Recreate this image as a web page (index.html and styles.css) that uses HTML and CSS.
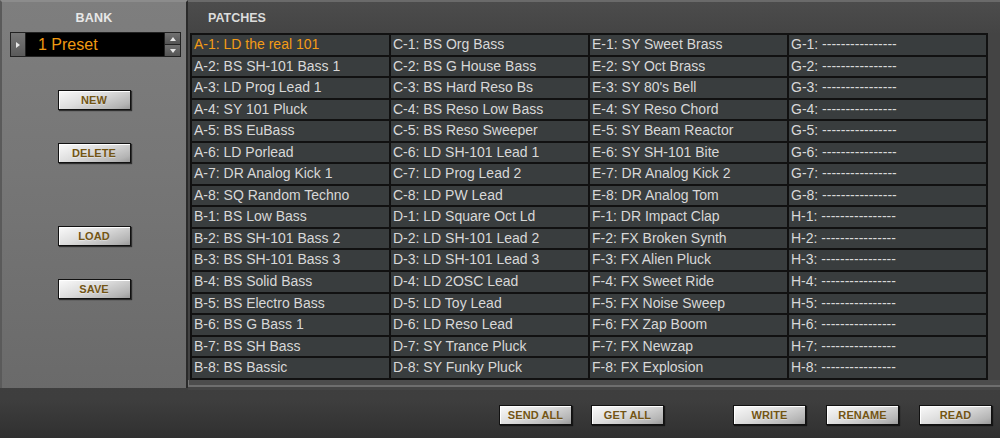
FILE: index.html
```html
<!DOCTYPE html>
<html>
<head>
<meta charset="utf-8">
<link rel="stylesheet" href="styles.css">
</head>
<body>
<div class="app">
  <div class="top">
    <aside class="bank">
      <div class="bank-title">BANK</div>
      <div class="dropdown">
        <div class="dd-left"><span class="tri-right"></span></div>
        <div class="dd-field">1 Preset</div>
        <div class="dd-spin">
          <div class="spin-btn"><span class="tri-up"></span></div>
          <div class="spin-btn"><span class="tri-down"></span></div>
        </div>
      </div>
      <div class="btn btn-new">NEW</div>
      <div class="btn btn-delete">DELETE</div>
      <div class="btn btn-load">LOAD</div>
      <div class="btn btn-save">SAVE</div>
    </aside>
    <section class="patches">
      <div class="patches-title">PATCHES</div>
      <div class="grid">
        <div class="cell sel">A-1: LD the real 101</div>
        <div class="cell">C-1: BS Org Bass</div>
        <div class="cell">E-1: SY Sweet Brass</div>
        <div class="cell">G-1: ----------------</div>
        <div class="cell">A-2: BS SH-101 Bass 1</div>
        <div class="cell">C-2: BS G House Bass</div>
        <div class="cell">E-2: SY Oct Brass</div>
        <div class="cell">G-2: ----------------</div>
        <div class="cell">A-3: LD Prog Lead 1</div>
        <div class="cell">C-3: BS Hard Reso Bs</div>
        <div class="cell">E-3: SY 80's Bell</div>
        <div class="cell">G-3: ----------------</div>
        <div class="cell">A-4: SY 101 Pluck</div>
        <div class="cell">C-4: BS Reso Low Bass</div>
        <div class="cell">E-4: SY Reso Chord</div>
        <div class="cell">G-4: ----------------</div>
        <div class="cell">A-5: BS EuBass</div>
        <div class="cell">C-5: BS Reso Sweeper</div>
        <div class="cell">E-5: SY Beam Reactor</div>
        <div class="cell">G-5: ----------------</div>
        <div class="cell">A-6: LD Porlead</div>
        <div class="cell">C-6: LD SH-101 Lead 1</div>
        <div class="cell">E-6: SY SH-101 Bite</div>
        <div class="cell">G-6: ----------------</div>
        <div class="cell">A-7: DR Analog Kick 1</div>
        <div class="cell">C-7: LD Prog Lead 2</div>
        <div class="cell">E-7: DR Analog Kick 2</div>
        <div class="cell">G-7: ----------------</div>
        <div class="cell">A-8: SQ Random Techno</div>
        <div class="cell">C-8: LD PW Lead</div>
        <div class="cell">E-8: DR Analog Tom</div>
        <div class="cell">G-8: ----------------</div>
        <div class="cell">B-1: BS Low Bass</div>
        <div class="cell">D-1: LD Square Oct Ld</div>
        <div class="cell">F-1: DR Impact Clap</div>
        <div class="cell">H-1: ----------------</div>
        <div class="cell">B-2: BS SH-101 Bass 2</div>
        <div class="cell">D-2: LD SH-101 Lead 2</div>
        <div class="cell">F-2: FX Broken Synth</div>
        <div class="cell">H-2: ----------------</div>
        <div class="cell">B-3: BS SH-101 Bass 3</div>
        <div class="cell">D-3: LD SH-101 Lead 3</div>
        <div class="cell">F-3: FX Alien Pluck</div>
        <div class="cell">H-3: ----------------</div>
        <div class="cell">B-4: BS Solid Bass</div>
        <div class="cell">D-4: LD 2OSC Lead</div>
        <div class="cell">F-4: FX Sweet Ride</div>
        <div class="cell">H-4: ----------------</div>
        <div class="cell">B-5: BS Electro Bass</div>
        <div class="cell">D-5: LD Toy Lead</div>
        <div class="cell">F-5: FX Noise Sweep</div>
        <div class="cell">H-5: ----------------</div>
        <div class="cell">B-6: BS G Bass 1</div>
        <div class="cell">D-6: LD Reso Lead</div>
        <div class="cell">F-6: FX Zap Boom</div>
        <div class="cell">H-6: ----------------</div>
        <div class="cell">B-7: BS SH Bass</div>
        <div class="cell">D-7: SY Trance Pluck</div>
        <div class="cell">F-7: FX Newzap</div>
        <div class="cell">H-7: ----------------</div>
        <div class="cell">B-8: BS Bassic</div>
        <div class="cell">D-8: SY Funky Pluck</div>
        <div class="cell">F-8: FX Explosion</div>
        <div class="cell">H-8: ----------------</div>
      </div>
      <div class="patches-foot"></div>
    </section>
  </div>
  <footer class="bottom">
    <div class="btn b-send">SEND ALL</div>
    <div class="btn b-get">GET ALL</div>
    <div class="btn b-write">WRITE</div>
    <div class="btn b-rename">RENAME</div>
    <div class="btn b-read">READ</div>
  </footer>
</div>
</body>
</html>
```

FILE: styles.css
```css
* { box-sizing: border-box; }
html, body {
  margin: 0;
  padding: 0;
  width: 1000px;
  height: 438px;
  overflow: hidden;
  background: #363636;
  font-family: "Liberation Sans", Arial, Helvetica, sans-serif;
}
.app {
  width: 1000px;
  height: 438px;
  display: flex;
  flex-direction: column;
  background: linear-gradient(180deg, #464646 0px, #3e3e3e 400px, #303030 438px);
}
.top {
  display: flex;
  height: 390px;
}
.bank {
  width: 188px;
  height: 388px;
  background: linear-gradient(180deg, #7e7e7e 0%, #777 40%, #6a6a6a 100%);
  border-top: 2px solid #8c8c8c;
  border-left: 2px solid #5a5a5a;
  border-right: 2px solid #2a2a2a;
  display: flex;
  flex-direction: column;
  align-items: center;
}
.bank-title {
  height: 30px;
  padding-top: 9px;
  font-size: 12.5px;
  font-weight: bold;
  color: #e8e8e8;
  letter-spacing: 0.2px;
  text-align: center;
  width: 100%;
}
.dropdown {
  align-self: flex-start;
  margin-left: 8px;
  width: 171px;
  height: 25px;
  display: flex;
  border: 1px solid #222;
  background: #000;
}
.dd-left {
  width: 15px;
  background: linear-gradient(180deg, #777, #5a5a5a);
  border-right: 1px solid #222;
  display: flex;
  align-items: center;
  justify-content: center;
}
.tri-right {
  width: 0; height: 0;
  border-top: 3px solid transparent;
  border-bottom: 3px solid transparent;
  border-left: 4px solid #e8e8e8;
}
.dd-field {
  flex: 1;
  background: #000;
  color: #f09a12;
  font-size: 16px;
  line-height: 23px;
  padding-left: 12px;
}
.dd-spin {
  width: 16px;
  display: flex;
  flex-direction: column;
  border-left: 1px solid #222;
}
.spin-btn {
  flex: 1;
  background: linear-gradient(180deg, #707070, #545454);
  display: flex;
  align-items: center;
  justify-content: center;
}
.spin-btn + .spin-btn { border-top: 1px solid #222; }
.tri-up {
  width: 0; height: 0;
  border-left: 3px solid transparent;
  border-right: 3px solid transparent;
  border-bottom: 4px solid #e8e8e8;
}
.tri-down {
  width: 0; height: 0;
  border-left: 3px solid transparent;
  border-right: 3px solid transparent;
  border-top: 4px solid #e8e8e8;
}
.btn {
  width: 73px;
  height: 20px;
  border: 1px solid #111;
  background: linear-gradient(160deg, #fafafa 0%, #dcdcdc 45%, #b4b4b4 85%, #9a9a9a 100%);
  box-shadow: 1px 1px 1px rgba(0,0,0,0.6), inset 1px 1px 0 #ffffff;
  color: #735514;
  font-size: 11px;
  font-weight: bold;
  text-align: center;
  line-height: 18px;
  letter-spacing: 0.1px;
  text-shadow: 0 1px 0 rgba(255,255,255,0.35);
}
.btn-new { margin-top: 33px; }
.btn-delete { margin-top: 33px; }
.btn-load { margin-top: 63px; }
.btn-save { margin-top: 33px; }

.patches {
  flex: 1;
  display: flex;
  flex-direction: column;
  background: linear-gradient(180deg, #4c4c4c 0px, #444 32px);
  border-top: 2px solid #6a6a6a;
}
.patches-title {
  height: 31px;
  padding-top: 9px;
  padding-left: 20px;
  font-size: 12.5px;
  font-weight: bold;
  color: #dcdcdc;
}
.grid {
  margin-left: 2px;
  width: 798px;
  display: grid;
  grid-template-columns: repeat(4, 197px);
  grid-auto-rows: 19.55px;
  gap: 2px;
  padding: 2px;
  background: #111;
}
.cell {
  background: #393d3e;
  color: #d8d8d8;
  font-size: 14px;
  line-height: 19.55px;
  padding-left: 2px;
  white-space: nowrap;
  overflow: hidden;
}
.cell.sel { color: #f39b16; }
.patches-foot {
  height: 7px;
  background: #4c4c4c;
  border-left: 1px solid #777;
  border-bottom: 2px solid #6e6e6e;
}
.bottom {
  display: flex;
  padding-top: 15px;
  padding-left: 499px;
}
.b-get { margin-left: 19px; }
.b-write { margin-left: 69px; }
.b-rename { margin-left: 20px; }
.b-read { margin-left: 20px; }
```
